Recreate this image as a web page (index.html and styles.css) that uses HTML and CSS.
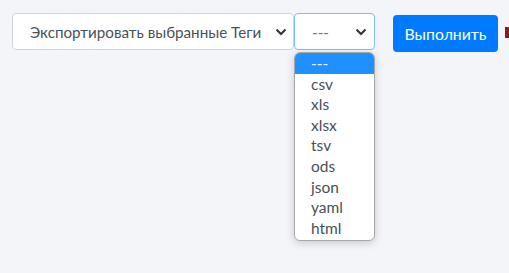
FILE: index.html
```html
<!DOCTYPE html>
<html>
<head>
<meta charset="utf-8">
<link rel="stylesheet" href="styles.css">
</head>
<body>
<div class="bar">
  <div class="sel sel-action">
    <span class="sel-text">Экспортировать выбранные Теги</span>
    <svg class="chev" width="12" height="8" viewBox="0 0 12 8"><path d="M1.5 1.5 L6 6 L10.5 1.5" fill="none" stroke="#343a40" stroke-width="2.2"/></svg>
  </div>
  <div class="fmt-col">
    <div class="sel sel-fmt">
      <span class="sel-text muted">---</span>
      <svg class="chev" width="12" height="8" viewBox="0 0 12 8"><path d="M1.5 1.5 L6 6 L10.5 1.5" fill="none" stroke="#343a40" stroke-width="2.2"/></svg>
    </div>
    <div class="opts">
      <div class="opt opt-on">---</div>
      <div class="opt">csv</div>
      <div class="opt">xls</div>
      <div class="opt">xlsx</div>
      <div class="opt">tsv</div>
      <div class="opt">ods</div>
      <div class="opt">json</div>
      <div class="opt">yaml</div>
      <div class="opt">html</div>
    </div>
  </div>
  <button class="btn">Выполнить</button>
  <span class="mark"></span>
</div>
</body>
</html>
```
FILE: styles.css
```css
html, body {
  margin: 0;
  padding: 0;
  background: #f4f5f9;
  font-family: "Lato", "Noto Sans", sans-serif;
  color: #495057;
}
body {
  min-height: 273px;
  overflow: hidden;
}
.bar {
  display: flex;
  align-items: flex-start;
  padding: 13px 0 0 12px;
}
.bar > * {
  flex-shrink: 0;
}
.sel {
  box-sizing: border-box;
  height: 37px;
  background: #fff;
  border: 1px solid #ced4da;
  border-radius: 4px;
  display: flex;
  align-items: center;
  justify-content: space-between;
  font-size: 15.2px;
}
.sel-action {
  width: 282px;
  padding: 0 6px 0 17px;
}
.fmt-col {
  display: flex;
  flex-direction: column;
  width: 81px;
}
.sel-fmt {
  width: 81px;
  border-color: #80bdff;
  padding: 0 7px 0 17px;
}
.muted {
  color: #6c757d;
}
.chev {
  display: block;
}
.opts {
  margin-top: 2px;
  width: 81px;
  box-sizing: border-box;
  padding: 0 0 2px;
  background: #fff;
  border: 1px solid #a8a8a8;
  border-radius: 6px;
  box-shadow: 0 2px 8px rgba(0,0,0,0.18);
  overflow: hidden;
  font-size: 15.5px;
}
.opt {
  height: 20.6px;
  line-height: 20.6px;
  padding-left: 16px;
  color: #495057;
}
.opt-on {
  background: #1e90ff;
  color: #fff;
}
.btn {
  margin: 2px 0 0 18px;
  width: 105px;
  height: 37px;
  border: none;
  border-radius: 4px;
  background: #007bff;
  color: #fff;
  font-family: inherit;
  font-size: 15.8px;
  padding: 0;
}
.mark {
  margin: 14px 0 0 7px;
  width: 6px;
  height: 11px;
  background: #8b1a1a;
}
```
